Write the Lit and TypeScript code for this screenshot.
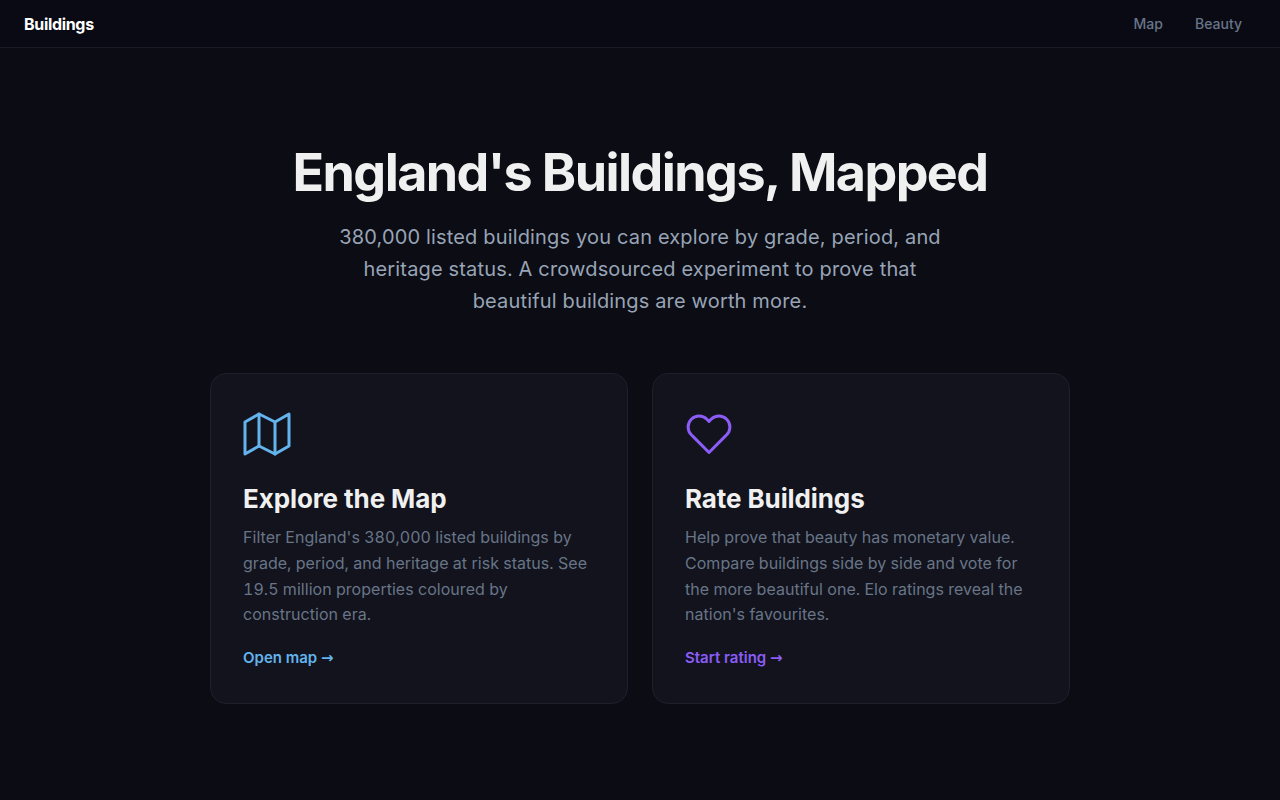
import { LitElement, html, css } from "lit";
import { customElement } from "lit/decorators.js";

@customElement("app-root")
export class AppRoot extends LitElement {
  static styles = css`
    :host { display: block; min-height: 800px; background: #0b0c14; color: #f0f0f0; font-family: Inter, "Liberation Sans", sans-serif; }
    .nav { display: flex; justify-content: space-between; align-items: center; box-sizing: border-box; height: 48px; padding: 0 38px 0 24px; border-bottom: 1px solid #1a1a26; background: #0a0a14; }
    .brand { font-size: 16px; font-weight: 700; letter-spacing: -0.02em; color: #fff; text-decoration: none; }
    .links { display: flex; gap: 32px; }
    .links a { font-size: 14px; line-height: 18px; font-weight: 500; color: #687588; text-decoration: none; }
    .main { display: flex; flex-direction: column; align-items: center; padding-top: 96px; }
    h1 { margin: 0 0 19px; font-size: 52px; line-height: 58px; font-weight: 700; letter-spacing: -0.03em; color: #f0f0f0; text-align: center; }
    .sub { margin: 0 0 56px; width: 620px; font-size: 20px; line-height: 32px; letter-spacing: 0.16px; color: #98a4b6; text-align: center; }
    .cards { display: grid; grid-template-columns: 418px 418px; gap: 24px; }
    .card { box-sizing: border-box; height: 331px; padding: 32px; background: #12131c; border: 1px solid #1e1f2b; border-radius: 16px; display: flex; flex-direction: column; align-items: flex-start; }
    .icon { display: block; width: 48px; height: 48px; margin-top: 4px; margin-bottom: 25px; fill: none; stroke-width: 1.5; stroke-linecap: round; stroke-linejoin: round; }
    .blue .icon { stroke: #63b3ed; }
    .purple .icon { stroke: #8b5cf6; }
    h2 { margin: 0 0 11.4px; font-size: 26px; line-height: 31px; font-weight: 700; letter-spacing: -0.1px; color: #f0f0f0; }
    .card p { margin: 0 0 18.6px; font-size: 16px; line-height: 25.6px; letter-spacing: 0.03px; color: #687588; font-variant-numeric: tabular-nums; }
    .go { font-size: 15px; font-weight: 600; text-decoration: none; line-height: 24px; }
    .arrow { font-family: "DejaVu Sans", sans-serif; font-weight: 700; }
    .blue .go { color: #63b3ed; }
    .purple .go { color: #8b5cf6; }
  `;

  render() {
    return html`
      <header class="nav">
        <a class="brand" href="#">Buildings</a>
        <nav class="links"><a href="#">Map</a><a href="#">Beauty</a></nav>
      </header>
      <main class="main">
        <h1>England's Buildings, Mapped</h1>
        <p class="sub">380,000 listed buildings you can explore by grade, period, and heritage status. A crowdsourced experiment to prove that beautiful buildings are worth more.</p>
        <div class="cards">
          <section class="card blue">
            <svg class="icon" viewBox="0 0 24 24"><polygon points="1 6 1 22 8 18 16 22 23 18 23 2 16 6 8 2 1 6"></polygon><line x1="8" y1="2" x2="8" y2="18"></line><line x1="16" y1="6" x2="16" y2="22"></line></svg>
            <h2>Explore the Map</h2>
            <p>Filter England's 380,000 listed buildings by grade, period, and heritage at risk status. See 19.5 million properties coloured by construction era.</p>
            <a class="go" href="#">Open map <span class="arrow">→</span></a>
          </section>
          <section class="card purple">
            <svg class="icon" viewBox="0 0 24 24"><path d="M20.84 4.61a5.5 5.5 0 0 0-7.78 0L12 5.67l-1.06-1.06a5.5 5.5 0 0 0-7.78 7.78l1.06 1.06L12 21.23l7.78-7.78 1.06-1.06a5.5 5.5 0 0 0 0-7.78z"></path></svg>
            <h2>Rate Buildings</h2>
            <p>Help prove that beauty has monetary value. Compare buildings side by side and vote for the more beautiful one. Elo ratings reveal the nation's favourites.</p>
            <a class="go" href="#">Start rating <span class="arrow">→</span></a>
          </section>
        </div>
      </main>
    `;
  }
}
